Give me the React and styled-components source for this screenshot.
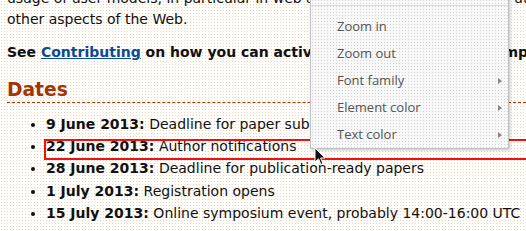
import React from "react";
import styled, { createGlobalStyle } from "styled-components";

const Global = createGlobalStyle`
  html, body { margin: 0; padding: 0; }
  body {
    width: 526px;
    height: 231px;
    overflow: hidden;
    background-color: #fffefb;
    background-image:
      radial-gradient(circle at 1.5px 1.5px, #ead6c8 0.7px, transparent 0.9px);
    background-size: 3px 3px;
    font-family: "DejaVu Sans", sans-serif;
    color: #111;
  }
`;

const Page = styled.div`
  position: relative;
  width: 526px;
  height: 231px;
  overflow: hidden;
`;

const Content = styled.div`
  padding: 0 0 0 7px;
  font-size: 14px;
  white-space: nowrap;
`;

const Para = styled.p`
  margin: ${(p) => p.$top || "0"} 0 0 0;
  line-height: 21px;
  font-weight: ${(p) => (p.$bold ? "bold" : "normal")};
`;

const Link = styled.a`
  color: #0b4a94;
  text-decoration: underline;
`;

const Heading = styled.h2`
  margin: 16.6px 0 0 0;
  font-size: 18.67px;
  line-height: 22.4px;
  font-weight: bold;
  color: #a33500;
  border-bottom: 1px dashed #a33500;
`;

const List = styled.ul`
  margin: 10px 0 0 0;
  padding-left: 39px;
  list-style: disc;
`;

const Item = styled.li`
  position: relative;
  line-height: 22.4px;
`;

const Highlight = styled.span`
  position: absolute;
  left: -2px;
  top: 3.5px;
  width: 600px;
  height: 17px;
  border: 2px solid #ee1111;
  pointer-events: none;
`;

const Menu = styled.div`
  position: absolute;
  left: 310px;
  top: -20px;
  width: 197px;
  padding: 0;
  border: 1px solid #c4c4c4;
  background-color: #f8f8f8;
  background-image: radial-gradient(circle at 1.5px 1.5px, #d2d2d2 0.7px, transparent 0.9px);
  background-size: 3px 3px;
  box-shadow: 1px 1px 3px rgba(0, 0, 0, 0.25);
  font-family: "Open Sans", sans-serif;
  font-size: 13px;
  color: #555;
`;

const Separator = styled.div`
  height: 24px;
  border-bottom: 1px solid #dcdcdc;
  margin-bottom: 7px;
`;

const MenuItem = styled.div`
  display: flex;
  align-items: center;
  justify-content: space-between;
  height: 27px;
  line-height: 27px;
  padding: 0 6px 0 26px;
`;

const Arrow = styled.span`
  width: 0;
  height: 0;
  border-top: 3px solid transparent;
  border-bottom: 3px solid transparent;
  border-left: 4px solid #888;
`;

const Cursor = styled.svg`
  position: absolute;
  left: 314px;
  top: 147px;
`;

const items = [
  ["9 June 2013:", " Deadline for paper submission"],
  ["22 June 2013:", " Author notifications"],
  ["28 June 2013:", " Deadline for publication-ready papers"],
  ["1 July 2013:", " Registration opens"],
  ["15 July 2013:", " Online symposium event, probably 14:00-16:00 UTC"],
];

const menu = [
  ["Zoom in", false],
  ["Zoom out", false],
  ["Font family", true],
  ["Element color", true],
  ["Text color", true],
];

export default function App() {
  return (
    <Page>
      <Global />
      <Content>
        <Para $top="-12.35px">
          usage of user models, in particular in web applications, and their future utilization
          <br />
          other aspects of the Web.
        </Para>
        <Para $top="12px" $bold>
          See <Link href="#">Contributing</Link> on how you can actively participate in this symposium.
        </Para>
        <Heading>Dates</Heading>
        <List>
          {items.map(([d, t], i) => (
            <Item key={i}>
              {i === 1 && <Highlight />}
              <b>{d}</b>
              {t}
            </Item>
          ))}
        </List>
      </Content>
      <Menu>
        <Separator />
        {menu.map(([label, sub]) => (
          <MenuItem key={label}>
            <span>{label}</span>
            {sub && <Arrow />}
          </MenuItem>
        ))}
      </Menu>
      <Cursor width="12" height="19" viewBox="0 0 12 19">
        <path d="M1 1 L1 15 L4.5 11.8 L7 17.5 L9 16.6 L6.6 11 L11 11 Z" fill="#111" stroke="#fff" strokeWidth="1" strokeLinejoin="round" />
      </Cursor>
    </Page>
  );
}
